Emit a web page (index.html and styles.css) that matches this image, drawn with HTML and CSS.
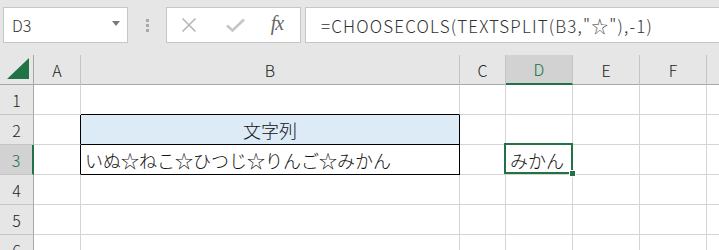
FILE: index.html
```html
<!DOCTYPE html>
<html lang="ja">
<head>
    <meta charset="UTF-8">
    <title>CHOOSECOLS - TEXTSPLIT</title>
    <link rel="stylesheet" href="styles.css">
</head>
<body>
    <!-- formula bar -->
    <div class="toolbar">
        <div class="namebox">
            <span>D3</span>
            <svg class="caret" width="8" height="5" viewBox="0 0 8 5"><path d="M0 0H8L4 5Z" fill="#7a7a7a"/></svg>
        </div>
        <div class="grip"><i></i><i></i><i></i></div>
        <div class="btns">
            <svg width="16" height="14" viewBox="0 0 16 14"><path d="M1.5 0.5L14.5 13.5M14.5 0.5L1.5 13.5" stroke="#b8b8b8" stroke-width="1.6" fill="none"/></svg>
            <svg width="19" height="14" viewBox="0 0 19 14"><path d="M1 7.5L6.5 12.5L18 1.5" stroke="#c6c6c6" stroke-width="2.6" fill="none"/></svg>
            <span class="fx">fx</span>
        </div>
        <div class="formula">=CHOOSECOLS(TEXTSPLIT(B3,"☆"),-1)</div>
    </div>

    <!-- sheet -->
    <div class="sheet">
        <div class="hd corner">
            <svg width="23" height="22" viewBox="0 0 23 22"><path d="M22 0V21H0Z" fill="#217346"/></svg>
        </div>
        <div class="hd col">A</div>
        <div class="hd col">B</div>
        <div class="hd col">C</div>
        <div class="hd col sel-col">D</div>
        <div class="hd col">E</div>
        <div class="hd col">F</div>
        <div class="hd col"></div>

        <div class="hd row">1</div>
        <div class="cell"></div>
        <div class="cell edge-b"></div>
        <div class="cell"></div><div class="cell"></div><div class="cell"></div><div class="cell"></div><div class="cell"></div>

        <div class="hd row">2</div>
        <div class="cell edge-r"></div>
        <div class="cell box title">文字列</div>
        <div class="cell"></div><div class="cell"></div><div class="cell"></div><div class="cell"></div><div class="cell"></div>

        <div class="hd row sel-row">3</div>
        <div class="cell edge-r"></div>
        <div class="cell box">いぬ☆ねこ☆ひつじ☆りんご☆みかん</div>
        <div class="cell"></div>
        <div class="cell active">みかん</div>
        <div class="cell"></div><div class="cell"></div><div class="cell"></div>

        <div class="hd row">4</div>
        <div class="cell"></div><div class="cell"></div><div class="cell"></div><div class="cell"></div><div class="cell"></div><div class="cell"></div><div class="cell"></div>

        <div class="hd row">5</div>
        <div class="cell"></div><div class="cell"></div><div class="cell"></div><div class="cell"></div><div class="cell"></div><div class="cell"></div><div class="cell"></div>

        <div class="hd row">6</div>
        <div class="cell"></div><div class="cell"></div><div class="cell"></div><div class="cell"></div><div class="cell"></div><div class="cell"></div><div class="cell"></div>
    </div>
</body>
</html>
```

FILE: styles.css
```css
body{
    margin: 0;
    width: 719px;
    height: 250px;
    overflow: hidden;
    background: #fff;
    font-family: "Noto Sans CJK JP", "Noto Sans", sans-serif;
    font-weight: 300;
    color: #222;
}
.toolbar{
    display: flex;
    align-items: flex-start;
    height: 55px;
    box-sizing: border-box;
    padding: 7px 0 0 3px;
    background: #e6e6e6;
}
.namebox, .btns, .formula{
    height: 36px;
    box-sizing: border-box;
    background: #fff;
    border: 1px solid #c6c6c6;
    display: flex;
    align-items: center;
}
.namebox{
    width: 127px;
    padding: 0 7px 0 8px;
    justify-content: space-between;
    font-size: 16px;
    color: #333;
}
.caret{
    margin-bottom: 3px;
}
.grip{
    width: 38px;
    height: 36px;
    display: flex;
    flex-direction: column;
    align-items: center;
    justify-content: center;
    gap: 2px;
}
.grip i{
    width: 3px;
    height: 3px;
    background: #a9a9a9;
}
.btns{
    width: 137px;
    padding-left: 14px;
}
.btns svg:first-child{
    margin-right: 29px;
}
.btns svg:nth-child(2){
    margin-right: 26px;
}
.fx{
    font-family: "Liberation Serif", serif;
    font-style: italic;
    font-size: 20px;
    color: #666;
    margin-top: -3px;
    letter-spacing: -1px;
}
.formula{
    margin-left: 4px;
    width: 420px;
    border-right: none;
    padding-left: 15px;
    font-size: 17px;
    letter-spacing: 1.15px;
    color: #333;
    white-space: nowrap;
}

.sheet{
    display: grid;
    grid-template-columns: 34px 47px 379px 46px 67px 67px 67px 40px;
    grid-auto-rows: 30px;
}
.hd{
    background: #e6e6e6;
    box-sizing: border-box;
    display: flex;
    align-items: center;
    justify-content: center;
    font-size: 16px;
    color: #222;
}
.col{
    border-right: 1px solid #c4c4c4;
    border-bottom: 1px solid #a8a8a8;
}
.corner{
    border-right: 1px solid #a8a8a8;
    border-bottom: 1px solid #a8a8a8;
    align-items: flex-end;
    justify-content: flex-end;
    padding: 0 3px 4px 0;
}
.row{
    border-right: 1px solid #a8a8a8;
    border-bottom: 1px solid #c4c4c4;
    padding-top: 1px;
}
.sel-col{
    background: #d2d2d2;
    color: #217346;
    border-bottom: 2px solid #217346;
}
.sel-row{
    background: #d2d2d2;
    color: #217346;
    border-right: 2px solid #217346;
}
.cell{
    box-sizing: border-box;
    border-right: 1px solid #d4d4d4;
    border-bottom: 1px solid #d4d4d4;
    display: flex;
    align-items: center;
    padding: 0 4px;
    font-size: 18px;
    white-space: nowrap;
    color: #111;
}
.edge-r{
    border-right-color: #000;
}
.edge-b{
    border-bottom-color: #000;
}
.box{
    border-right-color: #000;
    border-bottom-color: #000;
}
.title{
    background: #ddebf7;
    justify-content: center;
}
.active{
    position: relative;
}
.active::before{
    content: "";
    position: absolute;
    left: -2px;
    top: -2px;
    right: -1px;
    bottom: 0;
    border: 2px solid #217346;
}
.active::after{
    content: "";
    position: absolute;
    right: -4px;
    bottom: -3px;
    width: 5px;
    height: 5px;
    background: #217346;
    border: 1px solid #fff;
}
```
